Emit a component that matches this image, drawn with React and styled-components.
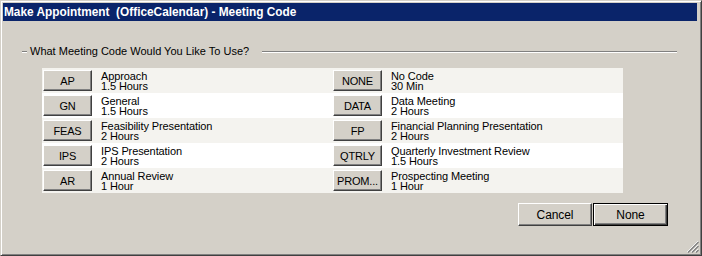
import React from 'react';
import styled, { createGlobalStyle } from 'styled-components';

const GlobalStyle = createGlobalStyle`
  html, body {
    margin: 0;
    padding: 0;
    background: #d4d0c8;
  }
  body {
    font-family: "Liberation Sans", Arial, sans-serif;
  }
`;

const Window = styled.div`
  position: relative;
  box-sizing: border-box;
  width: 702px;
  height: 256px;
  background: #d4d0c8;
  border: 1px solid;
  border-color: #d4d0c8 #404040 #404040 #d4d0c8;
  box-shadow: inset 1px 1px #fff, inset -1px -1px #808080;
  padding: 2px;
  display: flex;
  flex-direction: column;
`;

const TitleBar = styled.div`
  height: 18px;
  margin-right: 2px;
  background: #0a246a;
  color: #fff;
  font: bold 11.85px "Liberation Sans", Arial, sans-serif;
  display: flex;
  align-items: center;
  padding-left: 1px;
  white-space: pre;
`;

const Content = styled.div`
  display: flex;
  flex-direction: column;
  padding: 24px 22px 0 19px;
`;

const GroupHeader = styled.div`
  display: flex;
  align-items: center;
  height: 13px;
  font-size: 11px;
  color: #000;
`;

const Rule = styled.span`
  display: block;
  height: 0;
  border-top: 1px solid #808080;
  border-bottom: 1px solid #fff;
  width: ${(p) => (p.$grow ? 'auto' : '5px')};
  flex: ${(p) => (p.$grow ? '1' : 'none')};
`;

const GroupTitle = styled.span`
  margin: 0 13px 0 3px;
  line-height: 13px;
`;

const Grid = styled.div`
  margin: 10px 0 0 20px;
  width: 581px;
  background: #fff;
  display: flex;
  flex-direction: column;
`;

const Row = styled.div`
  display: flex;
  height: 25px;
  background: ${(p) => (p.$striped ? '#f4f3ef' : '#ffffff')};
`;

const Cell = styled.div`
  display: flex;
  align-items: center;
  gap: 9px;
  width: ${(p) => p.$width}px;
  padding-left: 1px;
  box-sizing: border-box;
`;

const CodeButton = styled.button`
  box-sizing: border-box;
  width: 49px;
  height: 21px;
  padding: 0;
  background: #d4d0c8;
  border: 1px solid;
  border-color: #fff #404040 #404040 #fff;
  box-shadow: inset -1px -1px #808080;
  font: 11px "Liberation Sans", Arial, sans-serif;
  letter-spacing: -0.2px;
  color: #000;
  text-align: center;
`;

const Label = styled.div`
  font-size: 11px;
  line-height: 10px;
  letter-spacing: -0.1px;
  color: #000;
  white-space: nowrap;
`;

const Footer = styled.div`
  display: flex;
  justify-content: flex-end;
  margin-top: 10px;
  padding-right: 9px;
`;

const DialogButton = styled.button`
  box-sizing: border-box;
  width: ${(p) => (p.$default ? 75 : 74)}px;
  height: 23px;
  padding: 0;
  margin-left: ${(p) => (p.$default ? 1 : 0)}px;
  background: #d4d0c8;
  font: 12px "Liberation Sans", Arial, sans-serif;
  letter-spacing: -0.1px;
  color: #000;
  border: 1px solid;
  border-color: ${(p) => (p.$default ? '#000' : '#fff #404040 #404040 #fff')};
  box-shadow: ${(p) =>
    p.$default
      ? 'inset 1px 1px #fff, inset -1px -1px #404040, inset -2px -2px #808080'
      : 'inset -1px -1px #808080'};
`;

const Grip = styled.svg`
  position: absolute;
  right: 2px;
  bottom: 2px;
`;

const codes = [
  [
    { code: 'AP', name: 'Approach', time: '1.5 Hours' },
    { code: 'NONE', name: 'No Code', time: '30 Min' },
  ],
  [
    { code: 'GN', name: 'General', time: '1.5 Hours' },
    { code: 'DATA', name: 'Data Meeting', time: '2 Hours' },
  ],
  [
    { code: 'FEAS', name: 'Feasibility Presentation', time: '2 Hours' },
    { code: 'FP', name: 'Financial Planning Presentation', time: '2 Hours' },
  ],
  [
    { code: 'IPS', name: 'IPS Presentation', time: '2 Hours' },
    { code: 'QTRLY', name: 'Quarterly Investment Review', time: '1.5 Hours' },
  ],
  [
    { code: 'AR', name: 'Annual Review', time: '1 Hour' },
    { code: 'PROM...', name: 'Prospecting Meeting', time: '1 Hour' },
  ],
];

function App() {
  return (
    <>
      <GlobalStyle />
      <Window>
        <TitleBar>Make Appointment  (OfficeCalendar) - Meeting Code</TitleBar>
        <Content>
          <GroupHeader>
            <Rule />
            <GroupTitle>What Meeting Code Would You Like To Use?</GroupTitle>
            <Rule $grow />
          </GroupHeader>
          <Grid>
            {codes.map((pair, i) => (
              <Row key={i} $striped={i % 2 === 0}>
                {pair.map((item, j) => (
                  <Cell key={item.code} $width={j === 0 ? 290 : 291}>
                    <CodeButton>{item.code}</CodeButton>
                    <Label>
                      {item.name}
                      <br />
                      {item.time}
                    </Label>
                  </Cell>
                ))}
              </Row>
            ))}
          </Grid>
          <Footer>
            <DialogButton>Cancel</DialogButton>
            <DialogButton $default>None</DialogButton>
          </Footer>
        </Content>
        <Grip width="12" height="12" viewBox="0 0 12 12">
          <path d="M11 0 L0 11 M11 4 L4 11 M11 8 L8 11" stroke="#fff" strokeWidth="1" />
          <path d="M11.5 1 L1 11.5 M11.5 5 L5 11.5 M11.5 9 L9 11.5" stroke="#808080" strokeWidth="1.4" />
        </Grip>
      </Window>
    </>
  );
}

export default App;
